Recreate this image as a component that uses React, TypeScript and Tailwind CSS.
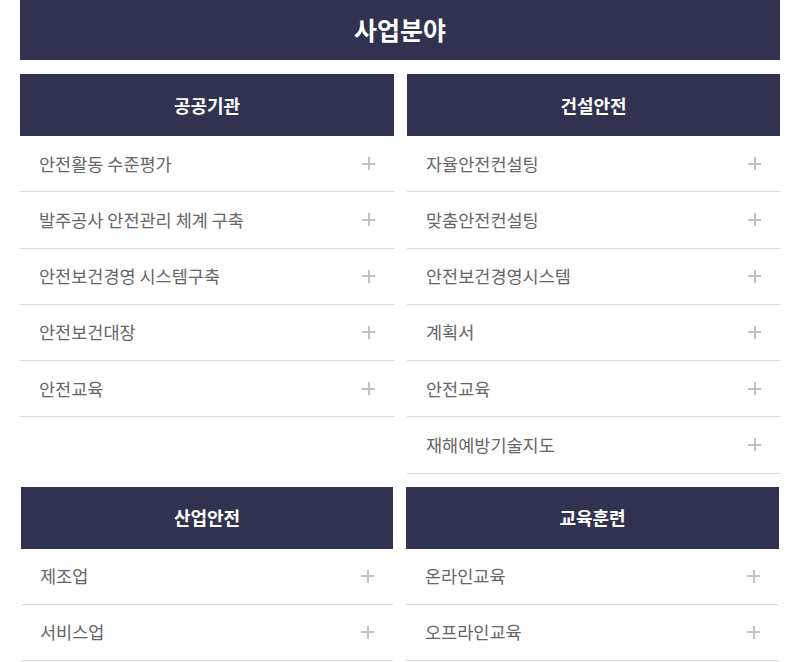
const sections = [
  {
    title: '공공기관',
    items: ['안전활동 수준평가', '발주공사 안전관리 체계 구축', '안전보건경영 시스템구축', '안전보건대장', '안전교육'],
  },
  {
    title: '건설안전',
    items: ['자율안전컨설팅', '맞춤안전컨설팅', '안전보건경영시스템', '계획서', '안전교육', '재해예방기술지도'],
  },
];

const sections2 = [
  { title: '산업안전', items: ['제조업', '서비스업'] },
  { title: '교육훈련', items: ['온라인교육', '오프라인교육'] },
];

const Plus = () => (
  <span className="relative w-[13px] h-[13px] shrink-0">
    <span className="absolute left-0 top-[5.5px] w-[13px] h-[2px] bg-[#c2c2c2]" />
    <span className="absolute top-0 left-[5.5px] h-[13px] w-[2px] bg-[#c2c2c2]" />
  </span>
);

const Column = ({ title, items }: { title: string; items: string[] }) => (
  <div className="flex flex-col">
    <div className="h-[62px] bg-[#313250] flex items-center justify-center text-white text-[18px] font-bold">
      {title}
    </div>
    {items.map((item) => (
      <div
        key={item}
        className="h-[56.25px] border-b border-[#dcdcdc] flex items-center justify-between pl-[19px] pr-[19px]"
      >
        <span className="text-[17.5px] text-[#666666]">{item}</span>
        <Plus />
      </div>
    ))}
  </div>
);

export default function App() {
  return (
    <div
      className="w-[800px] h-[662px] bg-white overflow-hidden"
      style={{ fontFamily: '"Noto Sans CJK KR", "Noto Sans", sans-serif' }}
    >
      <div className="mx-[20px] h-[60px] bg-[#313250] flex items-center justify-center text-white text-[25px] font-bold">
        사업분야
      </div>
      <div className="mx-[20px] mt-[14px] grid grid-cols-[374px_373px] gap-x-[13px]">
        {sections.map((s) => (
          <Column key={s.title} {...s} />
        ))}
      </div>
      <div className="ml-[21px] mr-[21px] mt-[13px] grid grid-cols-[372px_373px] gap-x-[13px]">
        {sections2.map((s) => (
          <Column key={s.title} {...s} />
        ))}
      </div>
    </div>
  );
}
